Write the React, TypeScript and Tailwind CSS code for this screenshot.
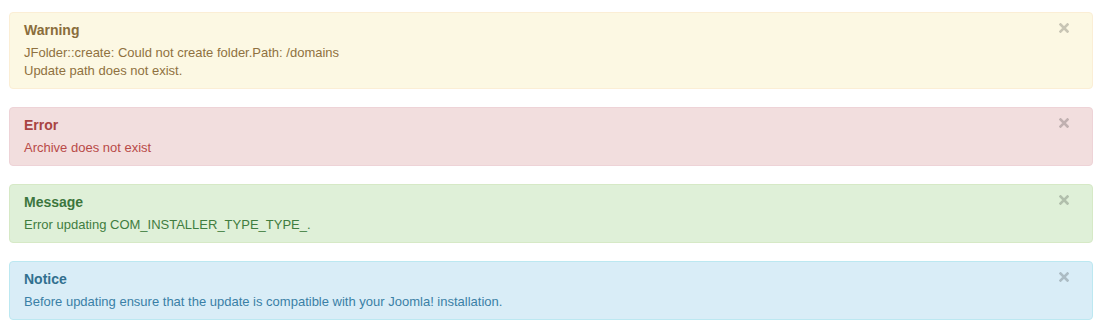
type Alert = {
  title: string;
  lines: string[];
  box: string;
  heading: string;
  body: string;
};

const alerts: Alert[] = [
  {
    title: "Warning",
    lines: ["JFolder::create: Could not create folder.Path: /domains", "Update path does not exist."],
    box: "bg-[#fcf8e3] border-[#fbeed5]",
    heading: "text-[#8a6d3b]",
    body: "text-[#8f7140]",
  },
  {
    title: "Error",
    lines: ["Archive does not exist"],
    box: "bg-[#f2dede] border-[#eed3d7]",
    heading: "text-[#a94442]",
    body: "text-[#b94a48]",
  },
  {
    title: "Message",
    lines: ["Error updating COM_INSTALLER_TYPE_TYPE_."],
    box: "bg-[#dff0d8] border-[#d6e9c6]",
    heading: "text-[#3c763d]",
    body: "text-[#3f7d3f]",
  },
  {
    title: "Notice",
    lines: ["Before updating ensure that the update is compatible with your Joomla! installation."],
    box: "bg-[#d9edf7] border-[#bce8f1]",
    heading: "text-[#31708f]",
    body: "text-[#3a80a6]",
  },
];

const CloseIcon = () => (
  <svg width="10" height="10" viewBox="0 0 10 10" aria-hidden="true">
    <path d="M1.5 1.5 L8.5 8.5 M8.5 1.5 L1.5 8.5" stroke="currentColor" strokeWidth="2.6" strokeLinecap="square" />
  </svg>
);

export default function App() {
  return (
    <div className="min-h-[330px] bg-white pl-[9px] pr-[13px] pt-[12px] font-['Liberation_Sans',Arial,sans-serif]">
      <div className="flex flex-col gap-[18px]">
        {alerts.map((a) => (
          <div
            key={a.title}
            className={`relative rounded-[4px] border pt-[8px] pb-[8px] pl-[14px] pr-[35px] ${a.box}`}
          >
            <h4 className={`mb-[5px] text-[14px] font-bold leading-[18px] ${a.heading}`}>{a.title}</h4>
            <div className={`text-[13px] leading-[18px] ${a.body}`}>
              {a.lines.map((l) => (
                <p key={l}>{l}</p>
              ))}
            </div>
            <button
              type="button"
              aria-label="Close"
              className="absolute right-[23px] top-[10px] flex h-[10px] w-[10px] text-black opacity-20"
            >
              <CloseIcon />
            </button>
          </div>
        ))}
      </div>
    </div>
  );
}
